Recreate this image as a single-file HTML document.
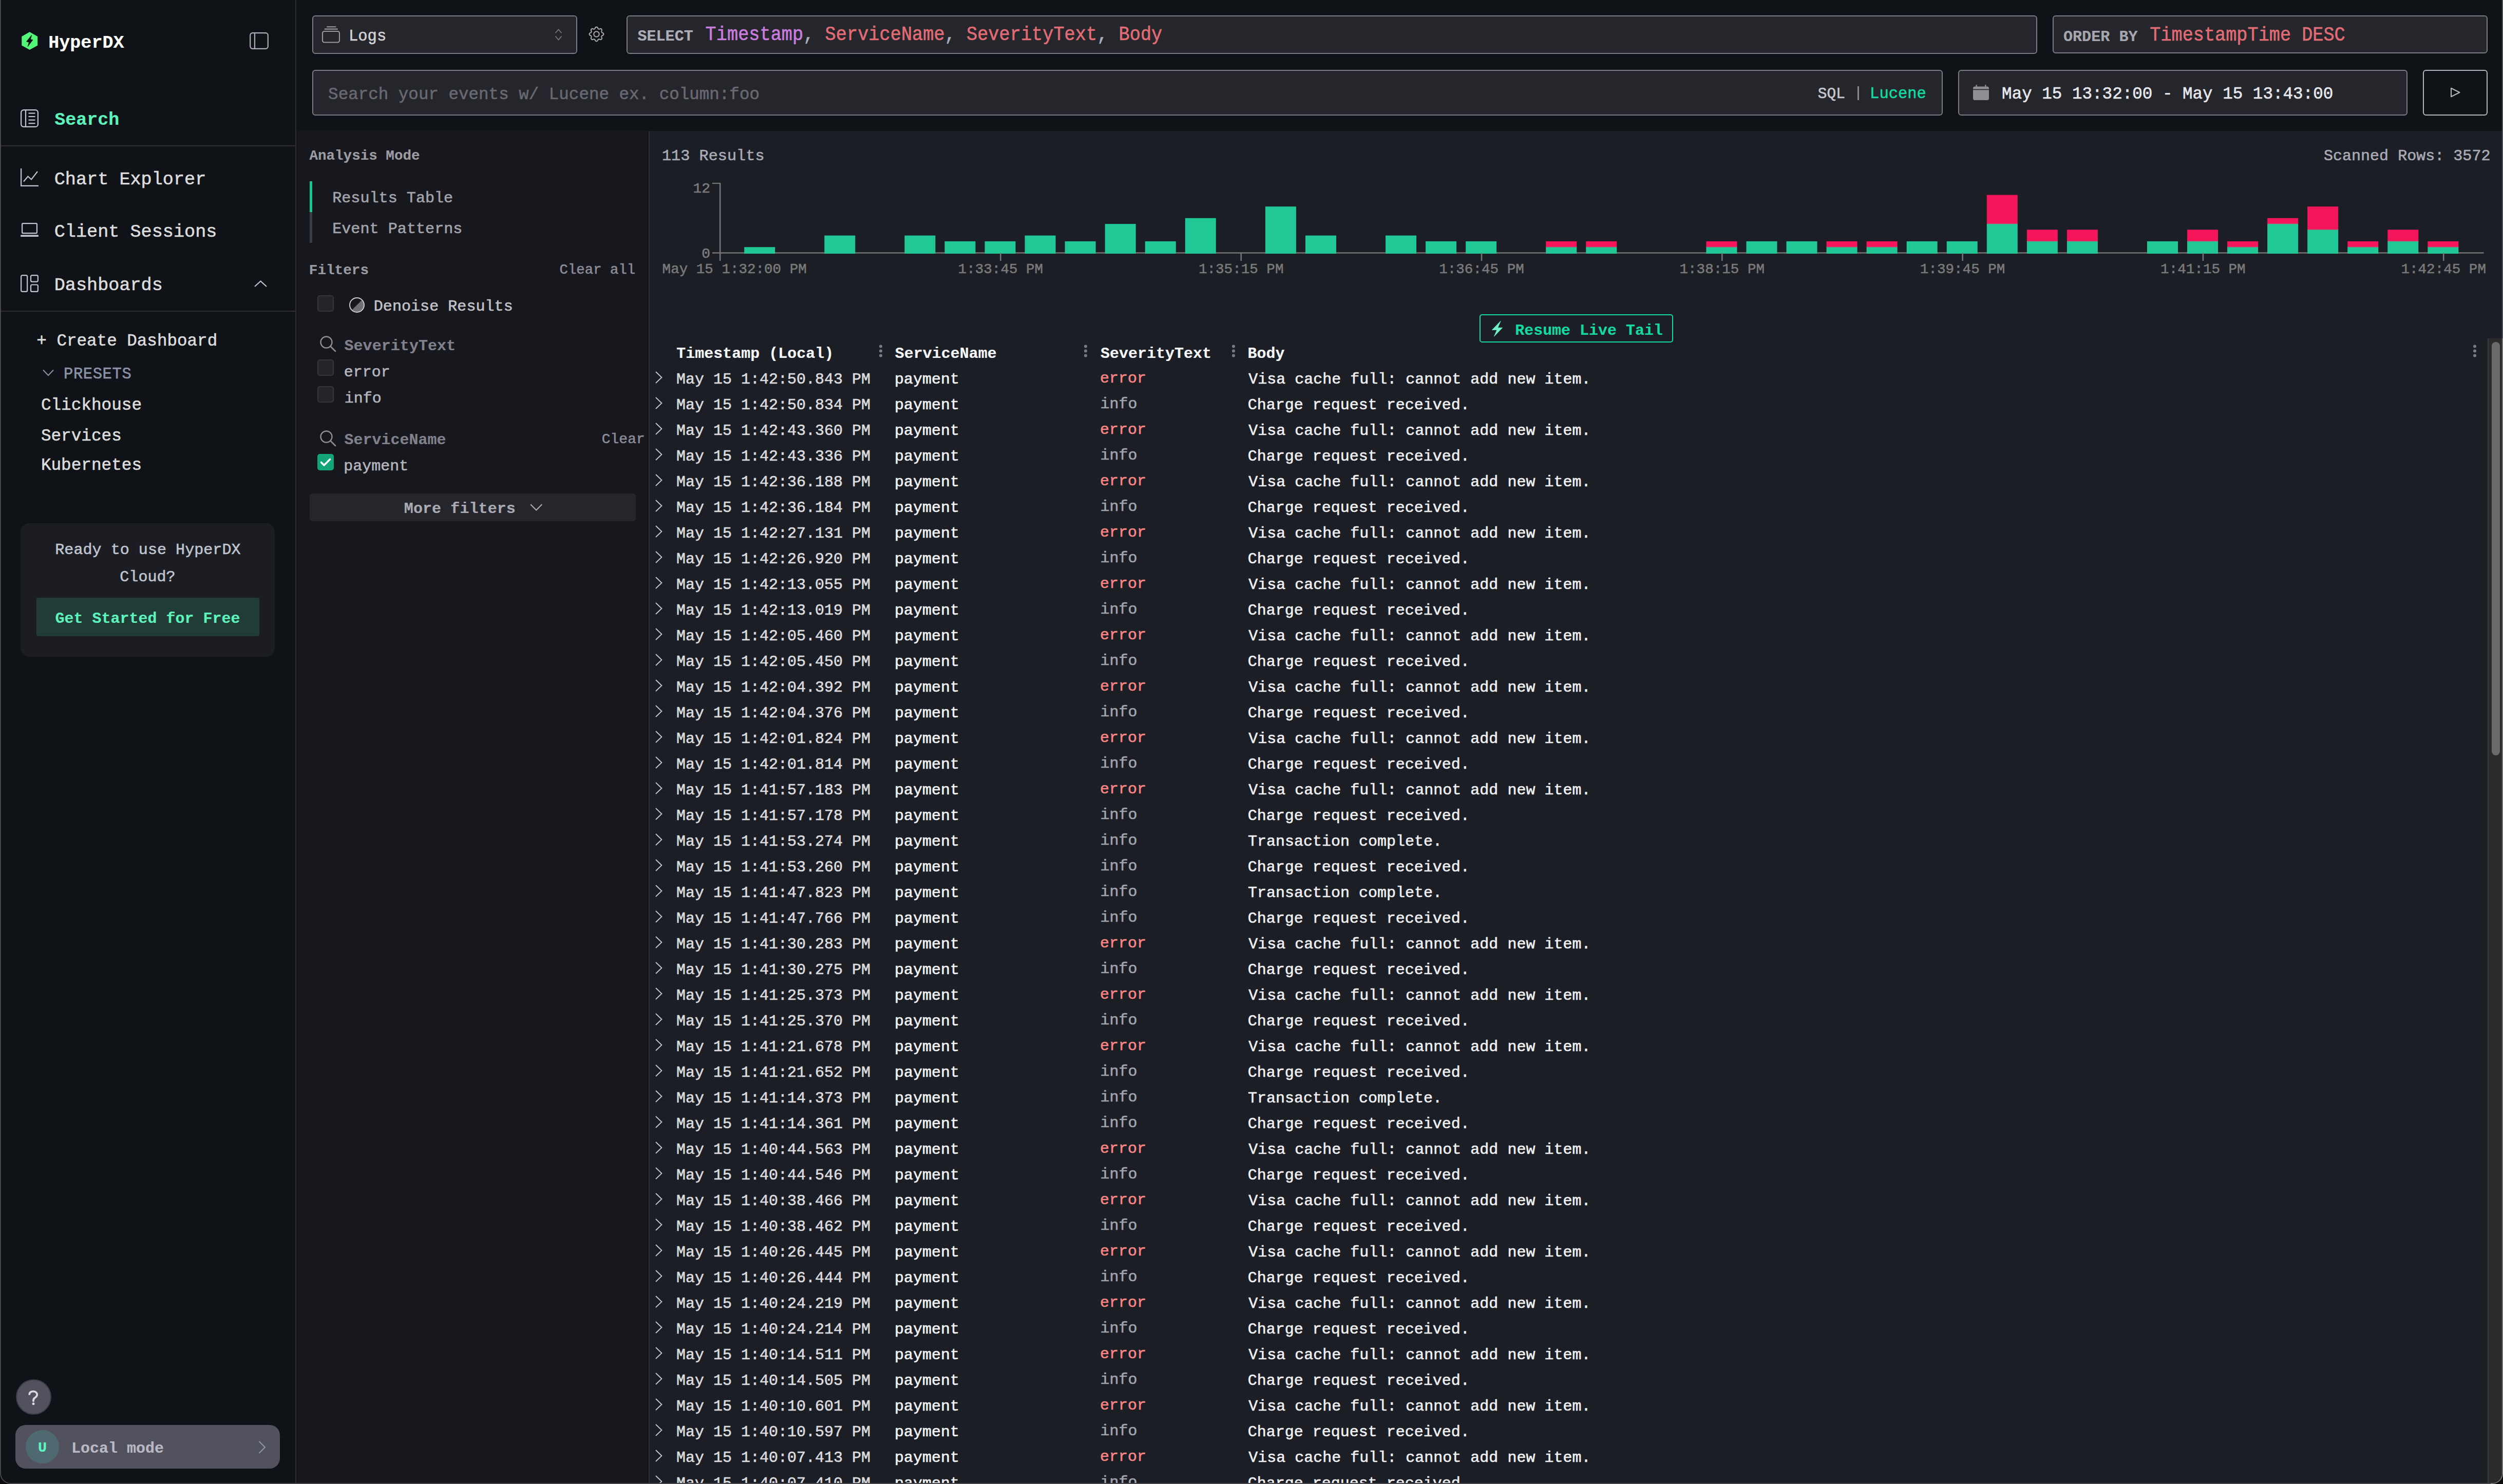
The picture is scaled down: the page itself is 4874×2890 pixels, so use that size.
<!DOCTYPE html>
<html><head><meta charset="utf-8"><title>HyperDX</title>
<style>
html,body{margin:0;padding:0;width:4874px;height:2890px;overflow:hidden;background:#0f1217;}
body{position:relative;font-family:'Liberation Mono', monospace;}
.t{position:absolute;white-space:pre;font-family:'Liberation Mono', monospace;-webkit-text-stroke:0.6px currentColor;}
.r{position:absolute;box-sizing:border-box;}
svg.r{overflow:visible;}
</style></head><body>
<div class="r" style="left:0.0px;top:0.0px;width:577.0px;height:2890.0px;background:#0f1217;"></div>
<div class="r" style="left:575.0px;top:0.0px;width:2.0px;height:2890.0px;background:#2b2d33;"></div>
<svg class="r" style="left:41.8px;top:61.8px;width:31.2px;height:35.3px" viewBox="0 0 31.2 35.3"><polygon points="15.7,0.2 31.2,8.9 31.2,26.5 15.7,35.0 0.3,26.5 0.3,8.9" fill="#52f77a"/><polygon points="19.6,6.6 9.6,18.9 14.6,20.3 12.1,28.6 21.9,15.6 17.3,14.8" fill="#0b0c0e" stroke="#0b0c0e" stroke-width="0.9" stroke-linejoin="round"/></svg>
<div class="t " style="left:94.2px;top:66.6px;font-size:35.1px;line-height:35.1px;color:#ffffff;font-weight:bold;-webkit-text-stroke-width:0.2px;">HyperDX</div>
<svg class="r" style="left:486.0px;top:63.0px;width:37px;height:33px" viewBox="0 0 37 33"><rect x="1.2" y="1.2" width="34.6" height="30.6" rx="4.5" fill="none" stroke="#adadb8" stroke-width="2.2"/><line x1="10" y1="1.5" x2="10" y2="31.5" stroke="#adadb8" stroke-width="2.2"/></svg>
<svg class="r" style="left:40.0px;top:213.0px;width:35px;height:35px" viewBox="0 0 35 35"><rect x="1.1" y="1.1" width="32.8" height="32.8" rx="5" fill="none" stroke="#c1c5cf" stroke-width="2.2"/><line x1="10" y1="1.5" x2="10" y2="33.5" stroke="#c1c5cf" stroke-width="2.2"/><g stroke="#c1c5cf" stroke-width="2.2"><line x1="15.5" y1="7.5" x2="28.5" y2="7.5"/><line x1="15.5" y1="14" x2="28.5" y2="14"/><line x1="15.5" y1="20.7" x2="28.5" y2="20.7"/><line x1="15.5" y1="27.2" x2="28.5" y2="27.2"/></g></svg>
<div class="t " style="left:106.3px;top:217.4px;font-size:35px;line-height:35px;color:#5ef2bd;font-weight:bold;-webkit-text-stroke-width:0.2px;">Search</div>
<div class="r" style="left:2.0px;top:283.0px;width:573.0px;height:2.0px;background:#2b2d33;"></div>
<svg class="r" style="left:40.0px;top:328.0px;width:35px;height:35px" viewBox="0 0 35 35"><polyline points="1.1,0 1.1,33.9 35,33.9" fill="none" stroke="#c1c5cf" stroke-width="2.2"/><polyline points="6,25.5 14.5,15.5 21,21.5 33,6" fill="none" stroke="#c1c5cf" stroke-width="2.2"/></svg>
<div class="t " style="left:105.7px;top:332.6px;font-size:35.2px;line-height:35.2px;color:#dcdcdc;">Chart Explorer</div>
<svg class="r" style="left:40.0px;top:434.0px;width:35px;height:27px" viewBox="0 0 35 27"><rect x="3.1" y="1.1" width="28.8" height="19" rx="1.5" fill="none" stroke="#c1c5cf" stroke-width="2.2"/><rect x="0" y="23.5" width="35" height="3.4" rx="1.2" fill="#c1c5cf"/></svg>
<div class="t " style="left:105.7px;top:434.8px;font-size:35.2px;line-height:35.2px;color:#dcdcdc;">Client Sessions</div>
<svg class="r" style="left:40.0px;top:534.5px;width:35px;height:34px" viewBox="0 0 35 34"><rect x="1.1" y="1.1" width="12" height="31.8" rx="2.5" fill="none" stroke="#c1c5cf" stroke-width="2.2"/><rect x="20" y="1.1" width="13.9" height="12.5" rx="2.5" fill="none" stroke="#c1c5cf" stroke-width="2.2"/><rect x="20" y="19.5" width="13.9" height="13.4" rx="2.5" fill="none" stroke="#c1c5cf" stroke-width="2.2"/></svg>
<div class="t " style="left:105.7px;top:538.6px;font-size:35.2px;line-height:35.2px;color:#dcdcdc;">Dashboards</div>
<svg class="r" style="left:495.0px;top:546.0px;width:25px;height:13px" viewBox="0 0 25 13"><polyline points="1,12 12.5,1.5 24,12" fill="none" stroke="#c1c5cf" stroke-width="2.2"/></svg>
<div class="r" style="left:2.0px;top:605.0px;width:573.0px;height:2.0px;background:#2b2d33;"></div>
<div class="t " style="left:71.3px;top:648.8px;font-size:32.6px;line-height:32.6px;color:#dcdcdc;">+ Create Dashboard</div>
<svg class="r" style="left:82.5px;top:719.0px;width:22px;height:14px" viewBox="0 0 22 14"><polyline points="1,1.5 11,12 21,1.5" fill="none" stroke="#8a93a6" stroke-width="2"/></svg>
<div class="t " style="left:124.0px;top:714.0px;font-size:30.5px;line-height:30.5px;color:#8a93a6;letter-spacing:0.6px;">PRESETS</div>
<div class="t " style="left:79.9px;top:774.3px;font-size:32.7px;line-height:32.7px;color:#dcdcdc;">Clickhouse</div>
<div class="t " style="left:79.9px;top:833.5px;font-size:32.7px;line-height:32.7px;color:#dcdcdc;">Services</div>
<div class="t " style="left:79.9px;top:891.2px;font-size:32.7px;line-height:32.7px;color:#dcdcdc;">Kubernetes</div>
<div class="r" style="left:40.0px;top:1019.0px;width:495.2px;height:260.0px;background:#1b1d23;border-radius:17px;"></div>
<div class="t" style="left:-712.1px;width:2000px;text-align:center;top:1056.1px;font-size:30.1px;line-height:30.1px;color:#bfc4ce;">Ready to use HyperDX</div>
<div class="t" style="left:-712.5px;width:2000px;text-align:center;top:1108.7px;font-size:30.1px;line-height:30.1px;color:#bfc4ce;">Cloud?</div>
<div class="r" style="left:71.0px;top:1164.0px;width:434.0px;height:75.0px;background:#213b37;border-radius:4px;"></div>
<div class="t" style="left:-712.5px;width:2000px;text-align:center;top:1190.2px;font-size:30px;line-height:30px;color:#5ef2bd;font-weight:bold;-webkit-text-stroke-width:0.2px;">Get Started for Free</div>
<div class="r" style="left:30.5px;top:2685.5px;width:69.0px;height:69.0px;background:#52525f;border-radius:50%;border:2px solid #3c3c46;"></div>
<svg class="r" style="left:55.0px;top:2708.0px;width:20px;height:29px" viewBox="0 0 20 29"><path d="M2.2,7.2 C2.8,3.6 5.6,1.6 9.6,1.6 C14,1.6 17.2,4.2 17.2,8 C17.2,11.2 15,12.8 12.6,14.4 C10.8,15.6 10,16.8 10,19.4 L10,20.2" fill="none" stroke="#d8dae0" stroke-width="3.8" stroke-linecap="round"/><circle cx="10" cy="25.8" r="2.5" fill="#d8dae0"/></svg>
<div class="r" style="left:30.0px;top:2775.0px;width:515.0px;height:85.0px;background:#52525f;border-radius:20px;"></div>
<div class="r" style="left:50.0px;top:2785.0px;width:65.0px;height:65.0px;background:#4e6a70;border-radius:50%;"></div>
<div class="t" style="left:-917.5px;width:2000px;text-align:center;top:2805.9px;font-size:28.5px;line-height:28.5px;color:#5ef5c0;font-weight:bold;-webkit-text-stroke-width:0.2px;">U</div>
<div class="t " style="left:139.0px;top:2806.2px;font-size:30px;line-height:30px;color:#b9b9c4;font-weight:bold;-webkit-text-stroke-width:0.2px;">Local mode</div>
<svg class="r" style="left:503.0px;top:2806.0px;width:15px;height:25px" viewBox="0 0 15 25"><polyline points="1.5,1 13,12.5 1.5,24" fill="none" stroke="#8e97ab" stroke-width="2"/></svg>
<div class="r" style="left:0.0px;top:0.0px;width:2.0px;height:2890.0px;background:#45474a;"></div>
<div class="r" style="left:577.0px;top:0.0px;width:4297.0px;height:255.0px;background:#0f1217;"></div>
<div class="r" style="left:608.2px;top:30.2px;width:516.3px;height:74.7px;background:#25262b;border:2px solid #7b7a85;border-radius:6px;"></div>
<svg class="r" style="left:627.3px;top:51.0px;width:35px;height:32px" viewBox="0 0 35 32"><rect x="1" y="10" width="33" height="21.5" rx="3.5" fill="none" stroke="#9a9a9e" stroke-width="2.1"/><line x1="5.5" y1="5.6" x2="30" y2="5.6" stroke="#9a9a9e" stroke-width="2.1" stroke-linecap="round"/><line x1="10" y1="1.2" x2="26.5" y2="1.2" stroke="#9a9a9e" stroke-width="2.1" stroke-linecap="round"/></svg>
<div class="t " style="left:679.0px;top:55.9px;font-size:30.5px;line-height:30.5px;color:#d0d0d4;">Logs</div>
<svg class="r" style="left:1080.0px;top:56.0px;width:15px;height:23px" viewBox="0 0 15 23"><polyline points="1.5,8.2 7.5,1.5 13.5,8.2" fill="none" stroke="#77777c" stroke-width="1.8"/><polyline points="1.5,14.5 7.5,21.5 13.5,14.5" fill="none" stroke="#77777c" stroke-width="1.8"/></svg>
<svg class="r" style="left:1143.4px;top:48.4px;width:37px;height:37px" viewBox="0 0 24 24"><g fill="none" stroke="#a9a9ae" stroke-width="1.3" stroke-linecap="round" stroke-linejoin="round"><path d="M10.325 4.317c.426 -1.756 2.924 -1.756 3.35 0a1.724 1.724 0 0 0 2.573 1.066c1.543 -.94 3.31 .826 2.37 2.37a1.724 1.724 0 0 0 1.065 2.572c1.756 .426 1.756 2.924 0 3.35a1.724 1.724 0 0 0 -1.066 2.573c.94 1.543 -.826 3.31 -2.37 2.37a1.724 1.724 0 0 0 -2.572 1.065c-.426 1.756 -2.924 1.756 -3.35 0a1.724 1.724 0 0 0 -2.573 -1.066c-1.543 .94 -3.31 -.826 -2.37 -2.37a1.724 1.724 0 0 0 -1.065 -2.572c-1.756 -.426 -1.756 -2.924 0 -3.35a1.724 1.724 0 0 0 1.066 -2.573c-.94 -1.543 .826 -3.31 2.37 -2.37c1 .608 2.296 .07 2.572 -1.065z"/><circle cx="12" cy="12" r="3.4"/></g></svg>
<div class="r" style="left:1220.0px;top:30.2px;width:2746.5px;height:74.7px;background:#25262b;border:2px solid #7b7a85;border-radius:6px;"></div>
<div class="t " style="left:1241.4px;top:56.2px;font-size:30.14px;line-height:30.14px;color:#aeaeb6;font-weight:bold;-webkit-text-stroke-width:0.2px;">SELECT</div>
<div class="t" style="left:1373.6px;top:52.1px;font-size:35.3px;line-height:35.3px;color:#a9b0bc;transform:scaleY(1.1);transform-origin:0 26.8px"><span style="color:#c97ddf">Timestamp</span>, <span style="color:#e06c75">ServiceName</span>, <span style="color:#e06c75">SeverityText</span>, <span style="color:#e06c75">Body</span></div>
<div class="r" style="left:3997.2px;top:30.2px;width:846.8px;height:74.3px;background:#25262b;border:2px solid #7b7a85;border-radius:6px;"></div>
<div class="t " style="left:4017.9px;top:56.5px;font-size:30.15px;line-height:30.15px;color:#a5a6ae;font-weight:bold;-webkit-text-stroke-width:0.2px;">ORDER BY</div>
<div class="t " style="left:4186.3px;top:52.6px;font-size:35.22px;line-height:35.22px;color:#e06c75;transform:scaleY(1.1);transform-origin:0 26.8px;">TimestampTime DESC</div>
<div class="r" style="left:608.2px;top:135.5px;width:3174.5px;height:89.7px;background:#25262b;border:2px solid #7b7a85;border-radius:6px;"></div>
<div class="t " style="left:639.1px;top:169.3px;font-size:32.55px;line-height:32.55px;color:#686970;">Search your events w/ Lucene ex. column:foo</div>
<div class="t " style="left:3539.8px;top:168.5px;font-size:29.5px;line-height:29.5px;color:#c8c8cc;">SQL</div>
<div class="r" style="left:3616.5px;top:168.0px;width:3.0px;height:27.0px;background:#8a8b90;"></div>
<div class="t " style="left:3641.1px;top:167.7px;font-size:30.47px;line-height:30.47px;color:#14d9a0;">Lucene</div>
<div class="r" style="left:3813.2px;top:135.5px;width:874.8px;height:89.7px;background:#25262b;border:2px solid #7b7a85;border-radius:6px;"></div>
<svg class="r" style="left:3842.0px;top:165.0px;width:31px;height:30px" viewBox="0 0 31 30"><rect x="0" y="3.5" width="31" height="26.5" rx="3.5" fill="#8e8e93"/><rect x="0" y="8.6" width="31" height="1.6" fill="#25262b"/><rect x="5.5" y="0" width="2.2" height="5" fill="#8e8e93"/><rect x="23.3" y="0" width="2.2" height="5" fill="#8e8e93"/></svg>
<div class="t " style="left:3898.1px;top:167.5px;font-size:32.59px;line-height:32.59px;color:#e6e7ec;">May 15 13:32:00 - May 15 13:43:00</div>
<div class="r" style="left:4718.0px;top:135.5px;width:126.0px;height:89.7px;background:#0f1217;border:2px solid #b5b5bd;border-radius:6px;"></div>
<svg class="r" style="left:4771.0px;top:169.5px;width:20px;height:20px" viewBox="0 0 20 20"><polygon points="2,1.8 18.5,10 2,18.2" fill="none" stroke="#b5b5bd" stroke-width="2.1" stroke-linejoin="round"/></svg>
<div class="r" style="left:577.0px;top:255.0px;width:688.0px;height:2635.0px;background:#17181d;"></div>
<div class="r" style="left:1263.0px;top:255.0px;width:2.0px;height:2635.0px;background:#2b2d33;"></div>
<div class="t " style="left:602.4px;top:290.3px;font-size:27.59px;line-height:27.59px;color:#9c9da3;font-weight:bold;-webkit-text-stroke-width:0.2px;">Analysis Mode</div>
<div class="r" style="left:602.8px;top:352.8px;width:5.4px;height:60.4px;background:#13c98f;"></div>
<div class="r" style="left:602.8px;top:413.2px;width:5.4px;height:59.8px;background:#3a3c43;"></div>
<div class="t " style="left:647.2px;top:371.4px;font-size:30.13px;line-height:30.13px;color:#a3a4ab;">Results Table</div>
<div class="t " style="left:647.2px;top:431.2px;font-size:30.15px;line-height:30.15px;color:#a3a4ab;">Event Patterns</div>
<div class="t " style="left:601.8px;top:512.9px;font-size:27.66px;line-height:27.66px;color:#9a9ba1;font-weight:bold;-webkit-text-stroke-width:0.2px;">Filters</div>
<div class="t " style="left:1089.5px;top:512.3px;font-size:27.36px;line-height:27.36px;color:#8b8c97;">Clear all</div>
<div class="r" style="left:618.3px;top:575.4px;width:31.4px;height:32.0px;background:#24252a;border:2px solid #35363b;border-radius:5px;"></div>
<svg class="r" style="left:680.0px;top:579.0px;width:30px;height:30px" viewBox="0 0 30 30"><defs><pattern id="hatch" width="2.6" height="2.6" patternUnits="userSpaceOnUse"><rect width="1.3" height="1.3" fill="#c9cacf"/><rect x="1.3" y="1.3" width="1.3" height="1.3" fill="#c9cacf"/></pattern></defs><path d="M25.3,4.7 A14,14 0 0 1 4.7,25.3 Z" fill="url(#hatch)"/><circle cx="15" cy="15" r="14" fill="none" stroke="#c9cacf" stroke-width="2"/></svg>
<div class="t " style="left:727.8px;top:582.3px;font-size:30.1px;line-height:30.1px;color:#c1c2c8;">Denoise Results</div>
<svg class="r" style="left:623.2px;top:654.2px;width:31px;height:31px" viewBox="0 0 31 31"><circle cx="12.5" cy="12.5" r="11" fill="none" stroke="#8d8e95" stroke-width="2.4"/><line x1="20.5" y1="20.5" x2="30" y2="30" stroke="#8d8e95" stroke-width="2.6" stroke-linecap="round"/></svg>
<div class="t " style="left:670.5px;top:658.5px;font-size:30.1px;line-height:30.1px;color:#80818b;font-weight:bold;-webkit-text-stroke-width:0.2px;">SeverityText</div>
<div class="r" style="left:618.1px;top:700.0px;width:31.7px;height:31.7px;background:#24252a;border:2px solid #35363b;border-radius:5px;"></div>
<div class="t " style="left:669.7px;top:709.6px;font-size:30px;line-height:30px;color:#b5b6bd;">error</div>
<div class="r" style="left:618.1px;top:752.3px;width:31.7px;height:31.5px;background:#24252a;border:2px solid #35363b;border-radius:5px;"></div>
<div class="t " style="left:670.7px;top:761.3px;font-size:30px;line-height:30px;color:#b5b6bd;">info</div>
<svg class="r" style="left:623.1px;top:838.0px;width:31px;height:31px" viewBox="0 0 31 31"><circle cx="12.5" cy="12.5" r="11" fill="none" stroke="#8d8e95" stroke-width="2.4"/><line x1="20.5" y1="20.5" x2="30" y2="30" stroke="#8d8e95" stroke-width="2.6" stroke-linecap="round"/></svg>
<div class="t " style="left:670.6px;top:842.7px;font-size:29.97px;line-height:29.97px;color:#80818b;font-weight:bold;-webkit-text-stroke-width:0.2px;">ServiceName</div>
<div class="t " style="left:1171.8px;top:841.5px;font-size:27.97px;line-height:27.97px;color:#8b8c97;">Clear</div>
<div class="r" style="left:618.1px;top:884.1px;width:31.7px;height:31.9px;background:#13a577;border-radius:5px;"></div>
<svg class="r" style="left:618.1px;top:884.1px;width:32px;height:32px" viewBox="0 0 32 32"><polyline points="7.5,16.5 13,22 24.5,10.5" fill="none" stroke="#ffffff" stroke-width="3.6" stroke-linecap="round" stroke-linejoin="round"/></svg>
<div class="t " style="left:669.3px;top:893.3px;font-size:30px;line-height:30px;color:#b5b6bd;">payment</div>
<div class="r" style="left:603.2px;top:961.1px;width:634.7px;height:54.3px;background:#25262b;border-radius:5px;"></div>
<div class="t " style="left:786.8px;top:976.4px;font-size:30.16px;line-height:30.16px;color:#a9aab2;font-weight:bold;-webkit-text-stroke-width:0.2px;">More filters</div>
<svg class="r" style="left:1031.7px;top:981.0px;width:24.5px;height:14px" viewBox="0 0 24.5 14"><polyline points="1.2,1.2 12.25,12.5 23.3,1.2" fill="none" stroke="#a9aab2" stroke-width="2.2"/></svg>
<div class="r" style="left:1265.0px;top:255.0px;width:3609.0px;height:2635.0px;background:#1b1e25;"></div>
<div class="t " style="left:1288.9px;top:289.1px;font-size:30.25px;line-height:30.25px;color:#a9aab3;">113 Results</div>
<div class="t " style="left:4524.9px;top:289.3px;font-size:30.06px;line-height:30.06px;color:#a9aab3;">Scanned Rows: 3572</div>
<svg class="r" style="left:0;top:0;width:4874px;height:600px" viewBox="0 0 4874 600"><line x1="1402.2" y1="357" x2="1402.2" y2="508" stroke="#757575" stroke-width="2.6"/><line x1="1387" y1="357" x2="1403.2" y2="357" stroke="#757575" stroke-width="2.2"/><line x1="1387" y1="492.5" x2="4836.6" y2="492.5" stroke="#757575" stroke-width="2.6"/><rect x="1449.25" y="481.21" width="60" height="12.79" fill="#21c896"/><rect x="1605.35" y="458.63" width="60" height="35.37" fill="#21c896"/><rect x="1761.45" y="458.63" width="60" height="35.37" fill="#21c896"/><rect x="1839.50" y="469.92" width="60" height="24.08" fill="#21c896"/><rect x="1917.55" y="469.92" width="60" height="24.08" fill="#21c896"/><rect x="1995.60" y="458.63" width="60" height="35.37" fill="#21c896"/><rect x="2073.65" y="469.92" width="60" height="24.08" fill="#21c896"/><rect x="2151.70" y="436.05" width="60" height="57.95" fill="#21c896"/><rect x="2229.75" y="469.92" width="60" height="24.08" fill="#21c896"/><rect x="2307.80" y="424.76" width="60" height="69.24" fill="#21c896"/><rect x="2463.90" y="402.18" width="60" height="91.82" fill="#21c896"/><rect x="2541.95" y="458.63" width="60" height="35.37" fill="#21c896"/><rect x="2698.05" y="458.63" width="60" height="35.37" fill="#21c896"/><rect x="2776.10" y="469.92" width="60" height="24.08" fill="#21c896"/><rect x="2854.15" y="469.92" width="60" height="24.08" fill="#21c896"/><rect x="3010.25" y="481.21" width="60" height="12.79" fill="#21c896"/><rect x="3010.25" y="469.92" width="60" height="11.29" fill="#f5155a"/><rect x="3010.25" y="480.61" width="60" height="1.3" fill="#8a8a8a" opacity="0.7"/><rect x="3088.30" y="481.21" width="60" height="12.79" fill="#21c896"/><rect x="3088.30" y="469.92" width="60" height="11.29" fill="#f5155a"/><rect x="3088.30" y="480.61" width="60" height="1.3" fill="#8a8a8a" opacity="0.7"/><rect x="3322.45" y="481.21" width="60" height="12.79" fill="#21c896"/><rect x="3322.45" y="469.92" width="60" height="11.29" fill="#f5155a"/><rect x="3322.45" y="480.61" width="60" height="1.3" fill="#8a8a8a" opacity="0.7"/><rect x="3400.50" y="469.92" width="60" height="24.08" fill="#21c896"/><rect x="3478.55" y="469.92" width="60" height="24.08" fill="#21c896"/><rect x="3556.60" y="481.21" width="60" height="12.79" fill="#21c896"/><rect x="3556.60" y="469.92" width="60" height="11.29" fill="#f5155a"/><rect x="3556.60" y="480.61" width="60" height="1.3" fill="#8a8a8a" opacity="0.7"/><rect x="3634.65" y="481.21" width="60" height="12.79" fill="#21c896"/><rect x="3634.65" y="469.92" width="60" height="11.29" fill="#f5155a"/><rect x="3634.65" y="480.61" width="60" height="1.3" fill="#8a8a8a" opacity="0.7"/><rect x="3712.70" y="469.92" width="60" height="24.08" fill="#21c896"/><rect x="3790.75" y="469.92" width="60" height="24.08" fill="#21c896"/><rect x="3868.80" y="436.05" width="60" height="57.95" fill="#21c896"/><rect x="3868.80" y="379.60" width="60" height="56.45" fill="#f5155a"/><rect x="3868.80" y="435.45" width="60" height="1.3" fill="#8a8a8a" opacity="0.7"/><rect x="3946.85" y="469.92" width="60" height="24.08" fill="#21c896"/><rect x="3946.85" y="447.34" width="60" height="22.58" fill="#f5155a"/><rect x="3946.85" y="469.32" width="60" height="1.3" fill="#8a8a8a" opacity="0.7"/><rect x="4024.90" y="469.92" width="60" height="24.08" fill="#21c896"/><rect x="4024.90" y="447.34" width="60" height="22.58" fill="#f5155a"/><rect x="4024.90" y="469.32" width="60" height="1.3" fill="#8a8a8a" opacity="0.7"/><rect x="4181.00" y="469.92" width="60" height="24.08" fill="#21c896"/><rect x="4259.05" y="469.92" width="60" height="24.08" fill="#21c896"/><rect x="4259.05" y="447.34" width="60" height="22.58" fill="#f5155a"/><rect x="4259.05" y="469.32" width="60" height="1.3" fill="#8a8a8a" opacity="0.7"/><rect x="4337.10" y="481.21" width="60" height="12.79" fill="#21c896"/><rect x="4337.10" y="469.92" width="60" height="11.29" fill="#f5155a"/><rect x="4337.10" y="480.61" width="60" height="1.3" fill="#8a8a8a" opacity="0.7"/><rect x="4415.15" y="436.05" width="60" height="57.95" fill="#21c896"/><rect x="4415.15" y="424.76" width="60" height="11.29" fill="#f5155a"/><rect x="4415.15" y="435.45" width="60" height="1.3" fill="#8a8a8a" opacity="0.7"/><rect x="4493.20" y="447.34" width="60" height="46.66" fill="#21c896"/><rect x="4493.20" y="402.18" width="60" height="45.16" fill="#f5155a"/><rect x="4493.20" y="446.74" width="60" height="1.3" fill="#8a8a8a" opacity="0.7"/><rect x="4571.25" y="481.21" width="60" height="12.79" fill="#21c896"/><rect x="4571.25" y="469.92" width="60" height="11.29" fill="#f5155a"/><rect x="4571.25" y="480.61" width="60" height="1.3" fill="#8a8a8a" opacity="0.7"/><rect x="4649.30" y="469.92" width="60" height="24.08" fill="#21c896"/><rect x="4649.30" y="447.34" width="60" height="22.58" fill="#f5155a"/><rect x="4649.30" y="469.32" width="60" height="1.3" fill="#8a8a8a" opacity="0.7"/><rect x="4727.35" y="481.21" width="60" height="12.79" fill="#21c896"/><rect x="4727.35" y="469.92" width="60" height="11.29" fill="#f5155a"/><rect x="4727.35" y="480.61" width="60" height="1.3" fill="#8a8a8a" opacity="0.7"/><line x1="1948.45" y1="492.5" x2="1948.45" y2="508" stroke="#757575" stroke-width="2.6"/><line x1="2416.75" y1="492.5" x2="2416.75" y2="508" stroke="#757575" stroke-width="2.6"/><line x1="2885.05" y1="492.5" x2="2885.05" y2="508" stroke="#757575" stroke-width="2.6"/><line x1="3353.35" y1="492.5" x2="3353.35" y2="508" stroke="#757575" stroke-width="2.6"/><line x1="3821.65" y1="492.5" x2="3821.65" y2="508" stroke="#757575" stroke-width="2.6"/><line x1="4289.95" y1="492.5" x2="4289.95" y2="508" stroke="#757575" stroke-width="2.6"/><line x1="4758.25" y1="492.5" x2="4758.25" y2="508" stroke="#757575" stroke-width="2.6"/></svg>
<div class="t" style="right:3491.0px;top:354.2px;font-size:28px;line-height:28px;color:#7b7b7b;">12</div>
<div class="t" style="right:3491.0px;top:480.7px;font-size:28px;line-height:28px;color:#7b7b7b;">0</div>
<div class="t " style="left:1289.6px;top:511.1px;font-size:27.57px;line-height:27.57px;color:#797979;">May 15 1:32:00 PM</div>
<div class="t " style="left:1865.6px;top:511.1px;font-size:27.6px;line-height:27.6px;color:#797979;">1:33:45 PM</div>
<div class="t " style="left:2333.9px;top:511.1px;font-size:27.6px;line-height:27.6px;color:#797979;">1:35:15 PM</div>
<div class="t " style="left:2802.2px;top:511.1px;font-size:27.6px;line-height:27.6px;color:#797979;">1:36:45 PM</div>
<div class="t " style="left:3270.5px;top:511.1px;font-size:27.6px;line-height:27.6px;color:#797979;">1:38:15 PM</div>
<div class="t " style="left:3738.8px;top:511.1px;font-size:27.6px;line-height:27.6px;color:#797979;">1:39:45 PM</div>
<div class="t " style="left:4207.1px;top:511.1px;font-size:27.6px;line-height:27.6px;color:#797979;">1:41:15 PM</div>
<div class="t " style="left:4675.4px;top:511.1px;font-size:27.6px;line-height:27.6px;color:#797979;">1:42:45 PM</div>
<div class="r" style="left:2881.2px;top:612.0px;width:376.8px;height:54.8px;background:transparent;border:2px solid #14d9a0;border-radius:5px;"></div>
<svg class="r" style="left:2904.8px;top:624.8px;width:21px;height:30.4px" viewBox="0 0 21 30.4"><polygon points="17.1,0.3 0.4,17.5 10,17.4 4.4,30.2 20.7,13.3 11.6,13.3" fill="#6ff2c8" stroke="#6ff2c8" stroke-width="0.8" stroke-linejoin="round"/></svg>
<div class="t " style="left:2950.2px;top:628.7px;font-size:29.98px;line-height:29.98px;color:#14d9a0;font-weight:bold;-webkit-text-stroke-width:0.2px;">Resume Live Tail</div>
<div class="t " style="left:1317.2px;top:674.4px;font-size:30px;line-height:30px;color:#f5f6f8;font-weight:bold;-webkit-text-stroke-width:0.2px;">Timestamp (Local)</div>
<div class="t " style="left:1742.7px;top:674.4px;font-size:30px;line-height:30px;color:#f5f6f8;font-weight:bold;-webkit-text-stroke-width:0.2px;">ServiceName</div>
<div class="t " style="left:2142.9px;top:674.4px;font-size:30px;line-height:30px;color:#f5f6f8;font-weight:bold;-webkit-text-stroke-width:0.2px;">SeverityText</div>
<div class="t " style="left:2429.4px;top:674.4px;font-size:30px;line-height:30px;color:#f5f6f8;font-weight:bold;-webkit-text-stroke-width:0.2px;">Body</div>
<svg class="r" style="left:1710.5px;top:671.0px;width:8px;height:25px" viewBox="0 0 8 25"><circle cx="4" cy="3.5" r="3" fill="#7a7b80"/><circle cx="4" cy="12.5" r="3" fill="#7a7b80"/><circle cx="4" cy="21.5" r="3" fill="#7a7b80"/></svg>
<svg class="r" style="left:2110.3px;top:671.0px;width:8px;height:25px" viewBox="0 0 8 25"><circle cx="4" cy="3.5" r="3" fill="#7a7b80"/><circle cx="4" cy="12.5" r="3" fill="#7a7b80"/><circle cx="4" cy="21.5" r="3" fill="#7a7b80"/></svg>
<svg class="r" style="left:2398.4px;top:671.0px;width:8px;height:25px" viewBox="0 0 8 25"><circle cx="4" cy="3.5" r="3" fill="#7a7b80"/><circle cx="4" cy="12.5" r="3" fill="#7a7b80"/><circle cx="4" cy="21.5" r="3" fill="#7a7b80"/></svg>
<svg class="r" style="left:4815.0px;top:671.0px;width:8px;height:25px" viewBox="0 0 8 25"><circle cx="4" cy="3.5" r="3" fill="#7a7b80"/><circle cx="4" cy="12.5" r="3" fill="#7a7b80"/><circle cx="4" cy="21.5" r="3" fill="#7a7b80"/></svg>
<svg class="r" style="left:1276.0px;top:723.0px;width:14px;height:24px" viewBox="0 0 14 24"><polyline points="1,1 12.5,12 1,23" fill="none" stroke="#c9cacf" stroke-width="1.8"/></svg>
<div class="t " style="left:1316.9px;top:724.2px;font-size:30px;line-height:30px;color:#dcdcdf;">May 15 1:42:50.843 PM</div>
<div class="t " style="left:1742.0px;top:724.2px;font-size:30px;line-height:30px;color:#f2f3f5;">payment</div>
<div class="t " style="left:2142.1px;top:722.3px;font-size:30px;line-height:30px;color:#f98585;">error</div>
<div class="t " style="left:2431.3px;top:724.2px;font-size:30px;line-height:30px;color:#f0f0f2;">Visa cache full: cannot add new item.</div>
<svg class="r" style="left:1276.0px;top:773.0px;width:14px;height:24px" viewBox="0 0 14 24"><polyline points="1,1 12.5,12 1,23" fill="none" stroke="#c9cacf" stroke-width="1.8"/></svg>
<div class="t " style="left:1316.9px;top:774.2px;font-size:30px;line-height:30px;color:#dcdcdf;">May 15 1:42:50.834 PM</div>
<div class="t " style="left:1742.0px;top:774.2px;font-size:30px;line-height:30px;color:#f2f3f5;">payment</div>
<div class="t " style="left:2142.6px;top:772.3px;font-size:30px;line-height:30px;color:#a3a3ad;">info</div>
<div class="t " style="left:2429.7px;top:774.2px;font-size:30px;line-height:30px;color:#f0f0f2;">Charge request received.</div>
<svg class="r" style="left:1276.0px;top:823.0px;width:14px;height:24px" viewBox="0 0 14 24"><polyline points="1,1 12.5,12 1,23" fill="none" stroke="#c9cacf" stroke-width="1.8"/></svg>
<div class="t " style="left:1316.9px;top:824.2px;font-size:30px;line-height:30px;color:#dcdcdf;">May 15 1:42:43.360 PM</div>
<div class="t " style="left:1742.0px;top:824.2px;font-size:30px;line-height:30px;color:#f2f3f5;">payment</div>
<div class="t " style="left:2142.1px;top:822.3px;font-size:30px;line-height:30px;color:#f98585;">error</div>
<div class="t " style="left:2431.3px;top:824.2px;font-size:30px;line-height:30px;color:#f0f0f2;">Visa cache full: cannot add new item.</div>
<svg class="r" style="left:1276.0px;top:873.0px;width:14px;height:24px" viewBox="0 0 14 24"><polyline points="1,1 12.5,12 1,23" fill="none" stroke="#c9cacf" stroke-width="1.8"/></svg>
<div class="t " style="left:1316.9px;top:874.2px;font-size:30px;line-height:30px;color:#dcdcdf;">May 15 1:42:43.336 PM</div>
<div class="t " style="left:1742.0px;top:874.2px;font-size:30px;line-height:30px;color:#f2f3f5;">payment</div>
<div class="t " style="left:2142.6px;top:872.3px;font-size:30px;line-height:30px;color:#a3a3ad;">info</div>
<div class="t " style="left:2429.7px;top:874.2px;font-size:30px;line-height:30px;color:#f0f0f2;">Charge request received.</div>
<svg class="r" style="left:1276.0px;top:923.0px;width:14px;height:24px" viewBox="0 0 14 24"><polyline points="1,1 12.5,12 1,23" fill="none" stroke="#c9cacf" stroke-width="1.8"/></svg>
<div class="t " style="left:1316.9px;top:924.2px;font-size:30px;line-height:30px;color:#dcdcdf;">May 15 1:42:36.188 PM</div>
<div class="t " style="left:1742.0px;top:924.2px;font-size:30px;line-height:30px;color:#f2f3f5;">payment</div>
<div class="t " style="left:2142.1px;top:922.3px;font-size:30px;line-height:30px;color:#f98585;">error</div>
<div class="t " style="left:2431.3px;top:924.2px;font-size:30px;line-height:30px;color:#f0f0f2;">Visa cache full: cannot add new item.</div>
<svg class="r" style="left:1276.0px;top:973.0px;width:14px;height:24px" viewBox="0 0 14 24"><polyline points="1,1 12.5,12 1,23" fill="none" stroke="#c9cacf" stroke-width="1.8"/></svg>
<div class="t " style="left:1316.9px;top:974.2px;font-size:30px;line-height:30px;color:#dcdcdf;">May 15 1:42:36.184 PM</div>
<div class="t " style="left:1742.0px;top:974.2px;font-size:30px;line-height:30px;color:#f2f3f5;">payment</div>
<div class="t " style="left:2142.6px;top:972.3px;font-size:30px;line-height:30px;color:#a3a3ad;">info</div>
<div class="t " style="left:2429.7px;top:974.2px;font-size:30px;line-height:30px;color:#f0f0f2;">Charge request received.</div>
<svg class="r" style="left:1276.0px;top:1023.0px;width:14px;height:24px" viewBox="0 0 14 24"><polyline points="1,1 12.5,12 1,23" fill="none" stroke="#c9cacf" stroke-width="1.8"/></svg>
<div class="t " style="left:1316.9px;top:1024.2px;font-size:30px;line-height:30px;color:#dcdcdf;">May 15 1:42:27.131 PM</div>
<div class="t " style="left:1742.0px;top:1024.2px;font-size:30px;line-height:30px;color:#f2f3f5;">payment</div>
<div class="t " style="left:2142.1px;top:1022.3px;font-size:30px;line-height:30px;color:#f98585;">error</div>
<div class="t " style="left:2431.3px;top:1024.2px;font-size:30px;line-height:30px;color:#f0f0f2;">Visa cache full: cannot add new item.</div>
<svg class="r" style="left:1276.0px;top:1073.0px;width:14px;height:24px" viewBox="0 0 14 24"><polyline points="1,1 12.5,12 1,23" fill="none" stroke="#c9cacf" stroke-width="1.8"/></svg>
<div class="t " style="left:1316.9px;top:1074.2px;font-size:30px;line-height:30px;color:#dcdcdf;">May 15 1:42:26.920 PM</div>
<div class="t " style="left:1742.0px;top:1074.2px;font-size:30px;line-height:30px;color:#f2f3f5;">payment</div>
<div class="t " style="left:2142.6px;top:1072.3px;font-size:30px;line-height:30px;color:#a3a3ad;">info</div>
<div class="t " style="left:2429.7px;top:1074.2px;font-size:30px;line-height:30px;color:#f0f0f2;">Charge request received.</div>
<svg class="r" style="left:1276.0px;top:1123.0px;width:14px;height:24px" viewBox="0 0 14 24"><polyline points="1,1 12.5,12 1,23" fill="none" stroke="#c9cacf" stroke-width="1.8"/></svg>
<div class="t " style="left:1316.9px;top:1124.2px;font-size:30px;line-height:30px;color:#dcdcdf;">May 15 1:42:13.055 PM</div>
<div class="t " style="left:1742.0px;top:1124.2px;font-size:30px;line-height:30px;color:#f2f3f5;">payment</div>
<div class="t " style="left:2142.1px;top:1122.3px;font-size:30px;line-height:30px;color:#f98585;">error</div>
<div class="t " style="left:2431.3px;top:1124.2px;font-size:30px;line-height:30px;color:#f0f0f2;">Visa cache full: cannot add new item.</div>
<svg class="r" style="left:1276.0px;top:1173.0px;width:14px;height:24px" viewBox="0 0 14 24"><polyline points="1,1 12.5,12 1,23" fill="none" stroke="#c9cacf" stroke-width="1.8"/></svg>
<div class="t " style="left:1316.9px;top:1174.2px;font-size:30px;line-height:30px;color:#dcdcdf;">May 15 1:42:13.019 PM</div>
<div class="t " style="left:1742.0px;top:1174.2px;font-size:30px;line-height:30px;color:#f2f3f5;">payment</div>
<div class="t " style="left:2142.6px;top:1172.3px;font-size:30px;line-height:30px;color:#a3a3ad;">info</div>
<div class="t " style="left:2429.7px;top:1174.2px;font-size:30px;line-height:30px;color:#f0f0f2;">Charge request received.</div>
<svg class="r" style="left:1276.0px;top:1223.0px;width:14px;height:24px" viewBox="0 0 14 24"><polyline points="1,1 12.5,12 1,23" fill="none" stroke="#c9cacf" stroke-width="1.8"/></svg>
<div class="t " style="left:1316.9px;top:1224.2px;font-size:30px;line-height:30px;color:#dcdcdf;">May 15 1:42:05.460 PM</div>
<div class="t " style="left:1742.0px;top:1224.2px;font-size:30px;line-height:30px;color:#f2f3f5;">payment</div>
<div class="t " style="left:2142.1px;top:1222.3px;font-size:30px;line-height:30px;color:#f98585;">error</div>
<div class="t " style="left:2431.3px;top:1224.2px;font-size:30px;line-height:30px;color:#f0f0f2;">Visa cache full: cannot add new item.</div>
<svg class="r" style="left:1276.0px;top:1273.0px;width:14px;height:24px" viewBox="0 0 14 24"><polyline points="1,1 12.5,12 1,23" fill="none" stroke="#c9cacf" stroke-width="1.8"/></svg>
<div class="t " style="left:1316.9px;top:1274.2px;font-size:30px;line-height:30px;color:#dcdcdf;">May 15 1:42:05.450 PM</div>
<div class="t " style="left:1742.0px;top:1274.2px;font-size:30px;line-height:30px;color:#f2f3f5;">payment</div>
<div class="t " style="left:2142.6px;top:1272.3px;font-size:30px;line-height:30px;color:#a3a3ad;">info</div>
<div class="t " style="left:2429.7px;top:1274.2px;font-size:30px;line-height:30px;color:#f0f0f2;">Charge request received.</div>
<svg class="r" style="left:1276.0px;top:1323.0px;width:14px;height:24px" viewBox="0 0 14 24"><polyline points="1,1 12.5,12 1,23" fill="none" stroke="#c9cacf" stroke-width="1.8"/></svg>
<div class="t " style="left:1316.9px;top:1324.2px;font-size:30px;line-height:30px;color:#dcdcdf;">May 15 1:42:04.392 PM</div>
<div class="t " style="left:1742.0px;top:1324.2px;font-size:30px;line-height:30px;color:#f2f3f5;">payment</div>
<div class="t " style="left:2142.1px;top:1322.3px;font-size:30px;line-height:30px;color:#f98585;">error</div>
<div class="t " style="left:2431.3px;top:1324.2px;font-size:30px;line-height:30px;color:#f0f0f2;">Visa cache full: cannot add new item.</div>
<svg class="r" style="left:1276.0px;top:1373.0px;width:14px;height:24px" viewBox="0 0 14 24"><polyline points="1,1 12.5,12 1,23" fill="none" stroke="#c9cacf" stroke-width="1.8"/></svg>
<div class="t " style="left:1316.9px;top:1374.2px;font-size:30px;line-height:30px;color:#dcdcdf;">May 15 1:42:04.376 PM</div>
<div class="t " style="left:1742.0px;top:1374.2px;font-size:30px;line-height:30px;color:#f2f3f5;">payment</div>
<div class="t " style="left:2142.6px;top:1372.3px;font-size:30px;line-height:30px;color:#a3a3ad;">info</div>
<div class="t " style="left:2429.7px;top:1374.2px;font-size:30px;line-height:30px;color:#f0f0f2;">Charge request received.</div>
<svg class="r" style="left:1276.0px;top:1423.0px;width:14px;height:24px" viewBox="0 0 14 24"><polyline points="1,1 12.5,12 1,23" fill="none" stroke="#c9cacf" stroke-width="1.8"/></svg>
<div class="t " style="left:1316.9px;top:1424.2px;font-size:30px;line-height:30px;color:#dcdcdf;">May 15 1:42:01.824 PM</div>
<div class="t " style="left:1742.0px;top:1424.2px;font-size:30px;line-height:30px;color:#f2f3f5;">payment</div>
<div class="t " style="left:2142.1px;top:1422.3px;font-size:30px;line-height:30px;color:#f98585;">error</div>
<div class="t " style="left:2431.3px;top:1424.2px;font-size:30px;line-height:30px;color:#f0f0f2;">Visa cache full: cannot add new item.</div>
<svg class="r" style="left:1276.0px;top:1473.0px;width:14px;height:24px" viewBox="0 0 14 24"><polyline points="1,1 12.5,12 1,23" fill="none" stroke="#c9cacf" stroke-width="1.8"/></svg>
<div class="t " style="left:1316.9px;top:1474.2px;font-size:30px;line-height:30px;color:#dcdcdf;">May 15 1:42:01.814 PM</div>
<div class="t " style="left:1742.0px;top:1474.2px;font-size:30px;line-height:30px;color:#f2f3f5;">payment</div>
<div class="t " style="left:2142.6px;top:1472.3px;font-size:30px;line-height:30px;color:#a3a3ad;">info</div>
<div class="t " style="left:2429.7px;top:1474.2px;font-size:30px;line-height:30px;color:#f0f0f2;">Charge request received.</div>
<svg class="r" style="left:1276.0px;top:1523.0px;width:14px;height:24px" viewBox="0 0 14 24"><polyline points="1,1 12.5,12 1,23" fill="none" stroke="#c9cacf" stroke-width="1.8"/></svg>
<div class="t " style="left:1316.9px;top:1524.2px;font-size:30px;line-height:30px;color:#dcdcdf;">May 15 1:41:57.183 PM</div>
<div class="t " style="left:1742.0px;top:1524.2px;font-size:30px;line-height:30px;color:#f2f3f5;">payment</div>
<div class="t " style="left:2142.1px;top:1522.3px;font-size:30px;line-height:30px;color:#f98585;">error</div>
<div class="t " style="left:2431.3px;top:1524.2px;font-size:30px;line-height:30px;color:#f0f0f2;">Visa cache full: cannot add new item.</div>
<svg class="r" style="left:1276.0px;top:1573.0px;width:14px;height:24px" viewBox="0 0 14 24"><polyline points="1,1 12.5,12 1,23" fill="none" stroke="#c9cacf" stroke-width="1.8"/></svg>
<div class="t " style="left:1316.9px;top:1574.2px;font-size:30px;line-height:30px;color:#dcdcdf;">May 15 1:41:57.178 PM</div>
<div class="t " style="left:1742.0px;top:1574.2px;font-size:30px;line-height:30px;color:#f2f3f5;">payment</div>
<div class="t " style="left:2142.6px;top:1572.3px;font-size:30px;line-height:30px;color:#a3a3ad;">info</div>
<div class="t " style="left:2429.7px;top:1574.2px;font-size:30px;line-height:30px;color:#f0f0f2;">Charge request received.</div>
<svg class="r" style="left:1276.0px;top:1623.0px;width:14px;height:24px" viewBox="0 0 14 24"><polyline points="1,1 12.5,12 1,23" fill="none" stroke="#c9cacf" stroke-width="1.8"/></svg>
<div class="t " style="left:1316.9px;top:1624.2px;font-size:30px;line-height:30px;color:#dcdcdf;">May 15 1:41:53.274 PM</div>
<div class="t " style="left:1742.0px;top:1624.2px;font-size:30px;line-height:30px;color:#f2f3f5;">payment</div>
<div class="t " style="left:2142.6px;top:1622.3px;font-size:30px;line-height:30px;color:#a3a3ad;">info</div>
<div class="t " style="left:2430.0px;top:1624.2px;font-size:30px;line-height:30px;color:#f0f0f2;">Transaction complete.</div>
<svg class="r" style="left:1276.0px;top:1673.0px;width:14px;height:24px" viewBox="0 0 14 24"><polyline points="1,1 12.5,12 1,23" fill="none" stroke="#c9cacf" stroke-width="1.8"/></svg>
<div class="t " style="left:1316.9px;top:1674.2px;font-size:30px;line-height:30px;color:#dcdcdf;">May 15 1:41:53.260 PM</div>
<div class="t " style="left:1742.0px;top:1674.2px;font-size:30px;line-height:30px;color:#f2f3f5;">payment</div>
<div class="t " style="left:2142.6px;top:1672.3px;font-size:30px;line-height:30px;color:#a3a3ad;">info</div>
<div class="t " style="left:2429.7px;top:1674.2px;font-size:30px;line-height:30px;color:#f0f0f2;">Charge request received.</div>
<svg class="r" style="left:1276.0px;top:1723.0px;width:14px;height:24px" viewBox="0 0 14 24"><polyline points="1,1 12.5,12 1,23" fill="none" stroke="#c9cacf" stroke-width="1.8"/></svg>
<div class="t " style="left:1316.9px;top:1724.2px;font-size:30px;line-height:30px;color:#dcdcdf;">May 15 1:41:47.823 PM</div>
<div class="t " style="left:1742.0px;top:1724.2px;font-size:30px;line-height:30px;color:#f2f3f5;">payment</div>
<div class="t " style="left:2142.6px;top:1722.3px;font-size:30px;line-height:30px;color:#a3a3ad;">info</div>
<div class="t " style="left:2430.0px;top:1724.2px;font-size:30px;line-height:30px;color:#f0f0f2;">Transaction complete.</div>
<svg class="r" style="left:1276.0px;top:1773.0px;width:14px;height:24px" viewBox="0 0 14 24"><polyline points="1,1 12.5,12 1,23" fill="none" stroke="#c9cacf" stroke-width="1.8"/></svg>
<div class="t " style="left:1316.9px;top:1774.2px;font-size:30px;line-height:30px;color:#dcdcdf;">May 15 1:41:47.766 PM</div>
<div class="t " style="left:1742.0px;top:1774.2px;font-size:30px;line-height:30px;color:#f2f3f5;">payment</div>
<div class="t " style="left:2142.6px;top:1772.3px;font-size:30px;line-height:30px;color:#a3a3ad;">info</div>
<div class="t " style="left:2429.7px;top:1774.2px;font-size:30px;line-height:30px;color:#f0f0f2;">Charge request received.</div>
<svg class="r" style="left:1276.0px;top:1823.0px;width:14px;height:24px" viewBox="0 0 14 24"><polyline points="1,1 12.5,12 1,23" fill="none" stroke="#c9cacf" stroke-width="1.8"/></svg>
<div class="t " style="left:1316.9px;top:1824.2px;font-size:30px;line-height:30px;color:#dcdcdf;">May 15 1:41:30.283 PM</div>
<div class="t " style="left:1742.0px;top:1824.2px;font-size:30px;line-height:30px;color:#f2f3f5;">payment</div>
<div class="t " style="left:2142.1px;top:1822.3px;font-size:30px;line-height:30px;color:#f98585;">error</div>
<div class="t " style="left:2431.3px;top:1824.2px;font-size:30px;line-height:30px;color:#f0f0f2;">Visa cache full: cannot add new item.</div>
<svg class="r" style="left:1276.0px;top:1873.0px;width:14px;height:24px" viewBox="0 0 14 24"><polyline points="1,1 12.5,12 1,23" fill="none" stroke="#c9cacf" stroke-width="1.8"/></svg>
<div class="t " style="left:1316.9px;top:1874.2px;font-size:30px;line-height:30px;color:#dcdcdf;">May 15 1:41:30.275 PM</div>
<div class="t " style="left:1742.0px;top:1874.2px;font-size:30px;line-height:30px;color:#f2f3f5;">payment</div>
<div class="t " style="left:2142.6px;top:1872.3px;font-size:30px;line-height:30px;color:#a3a3ad;">info</div>
<div class="t " style="left:2429.7px;top:1874.2px;font-size:30px;line-height:30px;color:#f0f0f2;">Charge request received.</div>
<svg class="r" style="left:1276.0px;top:1923.0px;width:14px;height:24px" viewBox="0 0 14 24"><polyline points="1,1 12.5,12 1,23" fill="none" stroke="#c9cacf" stroke-width="1.8"/></svg>
<div class="t " style="left:1316.9px;top:1924.2px;font-size:30px;line-height:30px;color:#dcdcdf;">May 15 1:41:25.373 PM</div>
<div class="t " style="left:1742.0px;top:1924.2px;font-size:30px;line-height:30px;color:#f2f3f5;">payment</div>
<div class="t " style="left:2142.1px;top:1922.3px;font-size:30px;line-height:30px;color:#f98585;">error</div>
<div class="t " style="left:2431.3px;top:1924.2px;font-size:30px;line-height:30px;color:#f0f0f2;">Visa cache full: cannot add new item.</div>
<svg class="r" style="left:1276.0px;top:1973.0px;width:14px;height:24px" viewBox="0 0 14 24"><polyline points="1,1 12.5,12 1,23" fill="none" stroke="#c9cacf" stroke-width="1.8"/></svg>
<div class="t " style="left:1316.9px;top:1974.2px;font-size:30px;line-height:30px;color:#dcdcdf;">May 15 1:41:25.370 PM</div>
<div class="t " style="left:1742.0px;top:1974.2px;font-size:30px;line-height:30px;color:#f2f3f5;">payment</div>
<div class="t " style="left:2142.6px;top:1972.3px;font-size:30px;line-height:30px;color:#a3a3ad;">info</div>
<div class="t " style="left:2429.7px;top:1974.2px;font-size:30px;line-height:30px;color:#f0f0f2;">Charge request received.</div>
<svg class="r" style="left:1276.0px;top:2023.0px;width:14px;height:24px" viewBox="0 0 14 24"><polyline points="1,1 12.5,12 1,23" fill="none" stroke="#c9cacf" stroke-width="1.8"/></svg>
<div class="t " style="left:1316.9px;top:2024.2px;font-size:30px;line-height:30px;color:#dcdcdf;">May 15 1:41:21.678 PM</div>
<div class="t " style="left:1742.0px;top:2024.2px;font-size:30px;line-height:30px;color:#f2f3f5;">payment</div>
<div class="t " style="left:2142.1px;top:2022.3px;font-size:30px;line-height:30px;color:#f98585;">error</div>
<div class="t " style="left:2431.3px;top:2024.2px;font-size:30px;line-height:30px;color:#f0f0f2;">Visa cache full: cannot add new item.</div>
<svg class="r" style="left:1276.0px;top:2073.0px;width:14px;height:24px" viewBox="0 0 14 24"><polyline points="1,1 12.5,12 1,23" fill="none" stroke="#c9cacf" stroke-width="1.8"/></svg>
<div class="t " style="left:1316.9px;top:2074.2px;font-size:30px;line-height:30px;color:#dcdcdf;">May 15 1:41:21.652 PM</div>
<div class="t " style="left:1742.0px;top:2074.2px;font-size:30px;line-height:30px;color:#f2f3f5;">payment</div>
<div class="t " style="left:2142.6px;top:2072.3px;font-size:30px;line-height:30px;color:#a3a3ad;">info</div>
<div class="t " style="left:2429.7px;top:2074.2px;font-size:30px;line-height:30px;color:#f0f0f2;">Charge request received.</div>
<svg class="r" style="left:1276.0px;top:2123.0px;width:14px;height:24px" viewBox="0 0 14 24"><polyline points="1,1 12.5,12 1,23" fill="none" stroke="#c9cacf" stroke-width="1.8"/></svg>
<div class="t " style="left:1316.9px;top:2124.2px;font-size:30px;line-height:30px;color:#dcdcdf;">May 15 1:41:14.373 PM</div>
<div class="t " style="left:1742.0px;top:2124.2px;font-size:30px;line-height:30px;color:#f2f3f5;">payment</div>
<div class="t " style="left:2142.6px;top:2122.3px;font-size:30px;line-height:30px;color:#a3a3ad;">info</div>
<div class="t " style="left:2430.0px;top:2124.2px;font-size:30px;line-height:30px;color:#f0f0f2;">Transaction complete.</div>
<svg class="r" style="left:1276.0px;top:2173.0px;width:14px;height:24px" viewBox="0 0 14 24"><polyline points="1,1 12.5,12 1,23" fill="none" stroke="#c9cacf" stroke-width="1.8"/></svg>
<div class="t " style="left:1316.9px;top:2174.2px;font-size:30px;line-height:30px;color:#dcdcdf;">May 15 1:41:14.361 PM</div>
<div class="t " style="left:1742.0px;top:2174.2px;font-size:30px;line-height:30px;color:#f2f3f5;">payment</div>
<div class="t " style="left:2142.6px;top:2172.3px;font-size:30px;line-height:30px;color:#a3a3ad;">info</div>
<div class="t " style="left:2429.7px;top:2174.2px;font-size:30px;line-height:30px;color:#f0f0f2;">Charge request received.</div>
<svg class="r" style="left:1276.0px;top:2223.0px;width:14px;height:24px" viewBox="0 0 14 24"><polyline points="1,1 12.5,12 1,23" fill="none" stroke="#c9cacf" stroke-width="1.8"/></svg>
<div class="t " style="left:1316.9px;top:2224.2px;font-size:30px;line-height:30px;color:#dcdcdf;">May 15 1:40:44.563 PM</div>
<div class="t " style="left:1742.0px;top:2224.2px;font-size:30px;line-height:30px;color:#f2f3f5;">payment</div>
<div class="t " style="left:2142.1px;top:2222.3px;font-size:30px;line-height:30px;color:#f98585;">error</div>
<div class="t " style="left:2431.3px;top:2224.2px;font-size:30px;line-height:30px;color:#f0f0f2;">Visa cache full: cannot add new item.</div>
<svg class="r" style="left:1276.0px;top:2273.0px;width:14px;height:24px" viewBox="0 0 14 24"><polyline points="1,1 12.5,12 1,23" fill="none" stroke="#c9cacf" stroke-width="1.8"/></svg>
<div class="t " style="left:1316.9px;top:2274.2px;font-size:30px;line-height:30px;color:#dcdcdf;">May 15 1:40:44.546 PM</div>
<div class="t " style="left:1742.0px;top:2274.2px;font-size:30px;line-height:30px;color:#f2f3f5;">payment</div>
<div class="t " style="left:2142.6px;top:2272.3px;font-size:30px;line-height:30px;color:#a3a3ad;">info</div>
<div class="t " style="left:2429.7px;top:2274.2px;font-size:30px;line-height:30px;color:#f0f0f2;">Charge request received.</div>
<svg class="r" style="left:1276.0px;top:2323.0px;width:14px;height:24px" viewBox="0 0 14 24"><polyline points="1,1 12.5,12 1,23" fill="none" stroke="#c9cacf" stroke-width="1.8"/></svg>
<div class="t " style="left:1316.9px;top:2324.2px;font-size:30px;line-height:30px;color:#dcdcdf;">May 15 1:40:38.466 PM</div>
<div class="t " style="left:1742.0px;top:2324.2px;font-size:30px;line-height:30px;color:#f2f3f5;">payment</div>
<div class="t " style="left:2142.1px;top:2322.3px;font-size:30px;line-height:30px;color:#f98585;">error</div>
<div class="t " style="left:2431.3px;top:2324.2px;font-size:30px;line-height:30px;color:#f0f0f2;">Visa cache full: cannot add new item.</div>
<svg class="r" style="left:1276.0px;top:2373.0px;width:14px;height:24px" viewBox="0 0 14 24"><polyline points="1,1 12.5,12 1,23" fill="none" stroke="#c9cacf" stroke-width="1.8"/></svg>
<div class="t " style="left:1316.9px;top:2374.2px;font-size:30px;line-height:30px;color:#dcdcdf;">May 15 1:40:38.462 PM</div>
<div class="t " style="left:1742.0px;top:2374.2px;font-size:30px;line-height:30px;color:#f2f3f5;">payment</div>
<div class="t " style="left:2142.6px;top:2372.3px;font-size:30px;line-height:30px;color:#a3a3ad;">info</div>
<div class="t " style="left:2429.7px;top:2374.2px;font-size:30px;line-height:30px;color:#f0f0f2;">Charge request received.</div>
<svg class="r" style="left:1276.0px;top:2423.0px;width:14px;height:24px" viewBox="0 0 14 24"><polyline points="1,1 12.5,12 1,23" fill="none" stroke="#c9cacf" stroke-width="1.8"/></svg>
<div class="t " style="left:1316.9px;top:2424.2px;font-size:30px;line-height:30px;color:#dcdcdf;">May 15 1:40:26.445 PM</div>
<div class="t " style="left:1742.0px;top:2424.2px;font-size:30px;line-height:30px;color:#f2f3f5;">payment</div>
<div class="t " style="left:2142.1px;top:2422.3px;font-size:30px;line-height:30px;color:#f98585;">error</div>
<div class="t " style="left:2431.3px;top:2424.2px;font-size:30px;line-height:30px;color:#f0f0f2;">Visa cache full: cannot add new item.</div>
<svg class="r" style="left:1276.0px;top:2473.0px;width:14px;height:24px" viewBox="0 0 14 24"><polyline points="1,1 12.5,12 1,23" fill="none" stroke="#c9cacf" stroke-width="1.8"/></svg>
<div class="t " style="left:1316.9px;top:2474.2px;font-size:30px;line-height:30px;color:#dcdcdf;">May 15 1:40:26.444 PM</div>
<div class="t " style="left:1742.0px;top:2474.2px;font-size:30px;line-height:30px;color:#f2f3f5;">payment</div>
<div class="t " style="left:2142.6px;top:2472.3px;font-size:30px;line-height:30px;color:#a3a3ad;">info</div>
<div class="t " style="left:2429.7px;top:2474.2px;font-size:30px;line-height:30px;color:#f0f0f2;">Charge request received.</div>
<svg class="r" style="left:1276.0px;top:2523.0px;width:14px;height:24px" viewBox="0 0 14 24"><polyline points="1,1 12.5,12 1,23" fill="none" stroke="#c9cacf" stroke-width="1.8"/></svg>
<div class="t " style="left:1316.9px;top:2524.2px;font-size:30px;line-height:30px;color:#dcdcdf;">May 15 1:40:24.219 PM</div>
<div class="t " style="left:1742.0px;top:2524.2px;font-size:30px;line-height:30px;color:#f2f3f5;">payment</div>
<div class="t " style="left:2142.1px;top:2522.3px;font-size:30px;line-height:30px;color:#f98585;">error</div>
<div class="t " style="left:2431.3px;top:2524.2px;font-size:30px;line-height:30px;color:#f0f0f2;">Visa cache full: cannot add new item.</div>
<svg class="r" style="left:1276.0px;top:2573.0px;width:14px;height:24px" viewBox="0 0 14 24"><polyline points="1,1 12.5,12 1,23" fill="none" stroke="#c9cacf" stroke-width="1.8"/></svg>
<div class="t " style="left:1316.9px;top:2574.2px;font-size:30px;line-height:30px;color:#dcdcdf;">May 15 1:40:24.214 PM</div>
<div class="t " style="left:1742.0px;top:2574.2px;font-size:30px;line-height:30px;color:#f2f3f5;">payment</div>
<div class="t " style="left:2142.6px;top:2572.3px;font-size:30px;line-height:30px;color:#a3a3ad;">info</div>
<div class="t " style="left:2429.7px;top:2574.2px;font-size:30px;line-height:30px;color:#f0f0f2;">Charge request received.</div>
<svg class="r" style="left:1276.0px;top:2623.0px;width:14px;height:24px" viewBox="0 0 14 24"><polyline points="1,1 12.5,12 1,23" fill="none" stroke="#c9cacf" stroke-width="1.8"/></svg>
<div class="t " style="left:1316.9px;top:2624.2px;font-size:30px;line-height:30px;color:#dcdcdf;">May 15 1:40:14.511 PM</div>
<div class="t " style="left:1742.0px;top:2624.2px;font-size:30px;line-height:30px;color:#f2f3f5;">payment</div>
<div class="t " style="left:2142.1px;top:2622.3px;font-size:30px;line-height:30px;color:#f98585;">error</div>
<div class="t " style="left:2431.3px;top:2624.2px;font-size:30px;line-height:30px;color:#f0f0f2;">Visa cache full: cannot add new item.</div>
<svg class="r" style="left:1276.0px;top:2673.0px;width:14px;height:24px" viewBox="0 0 14 24"><polyline points="1,1 12.5,12 1,23" fill="none" stroke="#c9cacf" stroke-width="1.8"/></svg>
<div class="t " style="left:1316.9px;top:2674.2px;font-size:30px;line-height:30px;color:#dcdcdf;">May 15 1:40:14.505 PM</div>
<div class="t " style="left:1742.0px;top:2674.2px;font-size:30px;line-height:30px;color:#f2f3f5;">payment</div>
<div class="t " style="left:2142.6px;top:2672.3px;font-size:30px;line-height:30px;color:#a3a3ad;">info</div>
<div class="t " style="left:2429.7px;top:2674.2px;font-size:30px;line-height:30px;color:#f0f0f2;">Charge request received.</div>
<svg class="r" style="left:1276.0px;top:2723.0px;width:14px;height:24px" viewBox="0 0 14 24"><polyline points="1,1 12.5,12 1,23" fill="none" stroke="#c9cacf" stroke-width="1.8"/></svg>
<div class="t " style="left:1316.9px;top:2724.2px;font-size:30px;line-height:30px;color:#dcdcdf;">May 15 1:40:10.601 PM</div>
<div class="t " style="left:1742.0px;top:2724.2px;font-size:30px;line-height:30px;color:#f2f3f5;">payment</div>
<div class="t " style="left:2142.1px;top:2722.3px;font-size:30px;line-height:30px;color:#f98585;">error</div>
<div class="t " style="left:2431.3px;top:2724.2px;font-size:30px;line-height:30px;color:#f0f0f2;">Visa cache full: cannot add new item.</div>
<svg class="r" style="left:1276.0px;top:2773.0px;width:14px;height:24px" viewBox="0 0 14 24"><polyline points="1,1 12.5,12 1,23" fill="none" stroke="#c9cacf" stroke-width="1.8"/></svg>
<div class="t " style="left:1316.9px;top:2774.2px;font-size:30px;line-height:30px;color:#dcdcdf;">May 15 1:40:10.597 PM</div>
<div class="t " style="left:1742.0px;top:2774.2px;font-size:30px;line-height:30px;color:#f2f3f5;">payment</div>
<div class="t " style="left:2142.6px;top:2772.3px;font-size:30px;line-height:30px;color:#a3a3ad;">info</div>
<div class="t " style="left:2429.7px;top:2774.2px;font-size:30px;line-height:30px;color:#f0f0f2;">Charge request received.</div>
<svg class="r" style="left:1276.0px;top:2823.0px;width:14px;height:24px" viewBox="0 0 14 24"><polyline points="1,1 12.5,12 1,23" fill="none" stroke="#c9cacf" stroke-width="1.8"/></svg>
<div class="t " style="left:1316.9px;top:2824.2px;font-size:30px;line-height:30px;color:#dcdcdf;">May 15 1:40:07.413 PM</div>
<div class="t " style="left:1742.0px;top:2824.2px;font-size:30px;line-height:30px;color:#f2f3f5;">payment</div>
<div class="t " style="left:2142.1px;top:2822.3px;font-size:30px;line-height:30px;color:#f98585;">error</div>
<div class="t " style="left:2431.3px;top:2824.2px;font-size:30px;line-height:30px;color:#f0f0f2;">Visa cache full: cannot add new item.</div>
<svg class="r" style="left:1276.0px;top:2873.0px;width:14px;height:24px" viewBox="0 0 14 24"><polyline points="1,1 12.5,12 1,23" fill="none" stroke="#c9cacf" stroke-width="1.8"/></svg>
<div class="t " style="left:1316.9px;top:2874.2px;font-size:30px;line-height:30px;color:#dcdcdf;">May 15 1:40:07.410 PM</div>
<div class="t " style="left:1742.0px;top:2874.2px;font-size:30px;line-height:30px;color:#f2f3f5;">payment</div>
<div class="t " style="left:2142.6px;top:2872.3px;font-size:30px;line-height:30px;color:#a3a3ad;">info</div>
<div class="t " style="left:2429.7px;top:2874.2px;font-size:30px;line-height:30px;color:#f0f0f2;">Charge request received.</div>
<div class="r" style="left:4844.0px;top:659.0px;width:30.0px;height:2231.0px;background:#2b2b2b;"></div>
<div class="r" style="left:4844.0px;top:659.0px;width:2.0px;height:2231.0px;background:#3a3a3a;"></div>
<div class="r" style="left:4852.0px;top:666.0px;width:16.0px;height:805.0px;background:#6b6b6b;border-radius:8px;"></div>
<div class="r" style="left:4872.0px;top:0.0px;width:2.0px;height:659.0px;background:#505257;"></div>
<div class="r" style="left:4872.0px;top:659.0px;width:2.0px;height:2231.0px;background:#767676;"></div>
<div class="r" style="left:0.0px;top:2888.0px;width:4874.0px;height:2.0px;background:#46474a;"></div>
<svg class="r" style="left:0.0px;top:2866.0px;width:24px;height:24px" viewBox="0 0 24 24"><path d="M0,0 L0,24 L24,24 L24,22 L22,22 A20,20 0 0 1 2,2 L2,0 Z" fill="#0b0b0c"/><path d="M1,0 L1,3 A20,20 0 0 0 21,23 L24,23" fill="none" stroke="#46474a" stroke-width="2"/></svg>
<svg class="r" style="left:4850.0px;top:2866.0px;width:24px;height:24px" viewBox="0 0 24 24"><path d="M24,0 L24,24 L0,24 L0,22 L2,22 A20,20 0 0 0 22,2 L22,0 Z" fill="#0b0b0c"/><path d="M23,0 L23,3 A20,20 0 0 1 3,23 L0,23" fill="none" stroke="#767676" stroke-width="2"/></svg>
</body></html>
